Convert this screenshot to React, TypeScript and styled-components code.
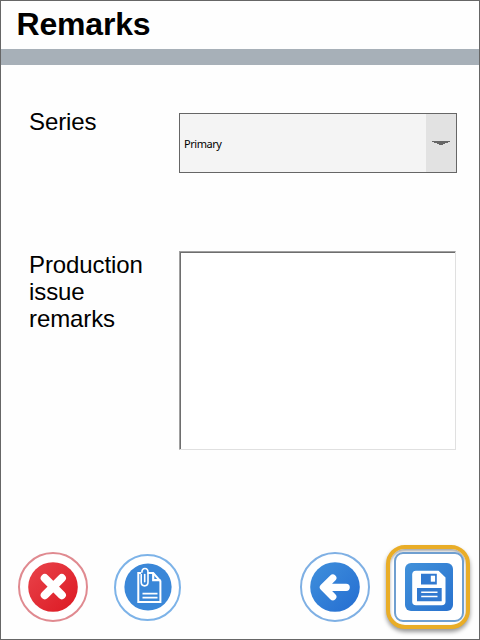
import React from "react";
import styled, { createGlobalStyle } from "styled-components";

const GlobalStyle = createGlobalStyle`
  *, *::before, *::after { box-sizing: border-box; }
  body { margin: 0; background: #fff; }
`;

const Screen = styled.main`
  display: flex;
  flex-direction: column;
  width: 480px;
  height: 640px;
  border: 1px solid #666;
  background: #fefefe;
  color: #000;
  font-family: "Liberation Sans", Arial, sans-serif;
  overflow: hidden;
`;

const Header = styled.header`
  height: 64px;
  flex: none;
  padding-left: 15.6px;
  border-bottom: 16px solid #a7b0b8;
`;

const Title = styled.h1`
  margin: 0;
  font-size: 32px;
  line-height: 46px;
  font-weight: 700;
  letter-spacing: -0.2px;
`;

const Form = styled.div`
  display: grid;
  grid-template-columns: 150px 278px;
  grid-template-rows: 60px 199px;
  row-gap: 78px;
  padding: 48px 0 0 28px;
`;

const Label = styled.label<{ $lift?: number }>`
  margin-top: -${(p) => p.$lift ?? 0}px;
  width: 130px;
  font-size: 24px;
  line-height: 27px;
  letter-spacing: -0.1px;
`;

const Select = styled.button`
  display: flex;
  align-items: stretch;
  padding: 0;
  border: 1px solid #666;
  border-radius: 0;
  background: #f4f4f4;
  text-align: left;
`;

const SelectValue = styled.span`
  flex: 1;
  align-self: center;
  padding: 2px 0 0 4px;
  font: 11px/14px "Noto Sans", sans-serif;
  letter-spacing: -0.45px;
  color: #000;
`;

const SelectArrow = styled.span`
  display: flex;
  align-items: center;
  justify-content: center;
  width: 30px;
  background: #e2e2e2;
`;

const Remarks = styled.textarea`
  width: 277px;
  height: 199px;
  border: 1px solid #e0e0e0;
  border-top-color: #a0a0a0;
  border-left-color: #a0a0a0;
  border-radius: 0;
  background: #fff;
  box-shadow: inset 1px 1px 0 #6e6e6e;
  resize: none;
  outline: none;
`;

const Footer = styled.footer`
  display: flex;
  align-items: center;
  margin-top: auto;
  padding: 0 9px 10px 17px;
`;

const RoundButton = styled.button<{ $size: number; $color: string; $gap?: number }>`
  flex: none;
  width: ${(p) => p.$size}px;
  height: ${(p) => p.$size}px;
  margin-left: ${(p) => p.$gap ?? 0}px;
  padding: 0;
  border: 2px solid ${(p) => p.$color};
  border-radius: 50%;
  background: #fff;
  display: flex;
  align-items: center;
  justify-content: center;
`;

const SaveHighlight = styled.div`
  flex: none;
  width: 84px;
  height: 84px;
  margin-left: 16px;
  padding: 3px 2px 3px 4px;
  border: 4px solid #e9ad27;
  border-radius: 19px;
  background: #fefefe;
  box-shadow: 0 3px 4px rgba(0, 0, 0, 0.4), inset 0 2px 3px rgba(0, 0, 0, 0.35);
`;

const SaveButton = styled.button`
  display: flex;
  align-items: center;
  justify-content: center;
  width: 70px;
  height: 70px;
  padding: 0;
  border: 2px solid #6f9fd0;
  border-radius: 9px;
  background: #fff;
`;

const Icon = styled.svg`
  display: block;
  flex: none;
`;

function CancelIcon() {
  return (
    <Icon width="50" height="50" viewBox="0 0 50 50">
      <defs>
        <linearGradient id="red" x1="0" y1="0" x2="1" y2="1">
          <stop offset="0" stopColor="#e9444b" />
          <stop offset="1" stopColor="#dc1822" />
        </linearGradient>
      </defs>
      <circle cx="25" cy="25" r="24.8" fill="url(#red)" />
      <path d="M16.8 16.2 33.8 33.2M33.8 16.2 16.8 33.2" stroke="#fff" strokeWidth="8.2" strokeLinecap="round" />
    </Icon>
  );
}

function AttachmentIcon() {
  return (
    <Icon width="48" height="48" viewBox="0 0 48 48" fill="none" stroke="#fff">
      <circle cx="24" cy="24" r="23.6" fill="#3a87d8" stroke="none" />
      <path d="M17 10h-2.7v29h22.1V18.2L29.2 10H23.5" strokeWidth="2" />
      <path d="M29.2 10v7.2h7.2" strokeWidth="2.2" />
      <path d="M18.5 30.6h15M18.5 34.6h15" strokeWidth="1.7" />
      <path d="M17.2 11.5v7.6c0 5 6.8 5 6.8 0V9.2c0-5-6.1-5-6.1 0" strokeWidth="1.6" strokeLinecap="round" />
      <path d="M20.7 11.5v7.2" strokeWidth="1.6" strokeLinecap="round" />
    </Icon>
  );
}

function BackIcon() {
  return (
    <Icon width="50" height="50" viewBox="0 0 50 50">
      <defs>
        <linearGradient id="blue" x1="0" y1="0" x2="1" y2="1">
          <stop offset="0" stopColor="#4090dc" />
          <stop offset="1" stopColor="#246dd1" />
        </linearGradient>
      </defs>
      <circle cx="25" cy="25" r="24.8" fill="url(#blue)" />
      <path d="M14.5 25.3H36.2M22.8 16 13.4 25.3l9.4 9.4" fill="none" stroke="#fff" strokeWidth="7.2" strokeLinecap="round" strokeLinejoin="round" />
    </Icon>
  );
}

function SaveIcon() {
  return (
    <Icon width="48" height="48" viewBox="0 0 48 48">
      <defs>
        <linearGradient id="save" x1="0" y1="0" x2="1" y2="1">
          <stop offset="0" stopColor="#4191da" />
          <stop offset="1" stopColor="#2972ce" />
        </linearGradient>
      </defs>
      <rect width="48" height="48" rx="6" fill="url(#save)" />
      <path d="M11 7.8h22.5l7 6.8v23.8a3.8 3.8 0 0 1-3.8 3.8H11a3.8 3.8 0 0 1-3.8-3.8V11.6A3.8 3.8 0 0 1 11 7.8Z" fill="#fff" />
      <path d="M16 10.7h15.8v10.8H16zM12 25h24.7v13.2H12z" fill="#3179d0" />
      <path d="M25.8 12.7h4.3v6h-4.3z" fill="#fff" />
      <path d="M16.2 29.2h16.3M16.2 33.5h16.3" stroke="#fff" strokeWidth="1.5" />
    </Icon>
  );
}

export default function App() {
  return (
    <>
      <GlobalStyle />
      <Screen>
        <Header>
          <Title>Remarks</Title>
        </Header>
        <Form>
          <Label $lift={5} htmlFor="series">Series</Label>
          <Select id="series" type="button">
            <SelectValue>Primary</SelectValue>
            <SelectArrow>
              <Icon width="18" height="4" viewBox="0 0 18 4">
                <path d="M0 0h18v1h-2v1h-3v1h-2v1H7V3H5V2H2V1H0z" fill="#666" />
              </Icon>
            </SelectArrow>
          </Select>
          <Label htmlFor="remarks">Production issue remarks</Label>
          <Remarks id="remarks" />
        </Form>
        <Footer>
          <RoundButton type="button" aria-label="Cancel" $size={70} $color="#e08a90">
            <CancelIcon />
          </RoundButton>
          <RoundButton type="button" aria-label="Attachments" $size={67} $color="#7db3e8" $gap={26}>
            <AttachmentIcon />
          </RoundButton>
          <RoundButton type="button" aria-label="Back" $size={70} $color="#7fb0e4" $gap={119}>
            <BackIcon />
          </RoundButton>
          <SaveHighlight>
            <SaveButton type="button" aria-label="Save">
              <SaveIcon />
            </SaveButton>
          </SaveHighlight>
        </Footer>
      </Screen>
    </>
  );
}
